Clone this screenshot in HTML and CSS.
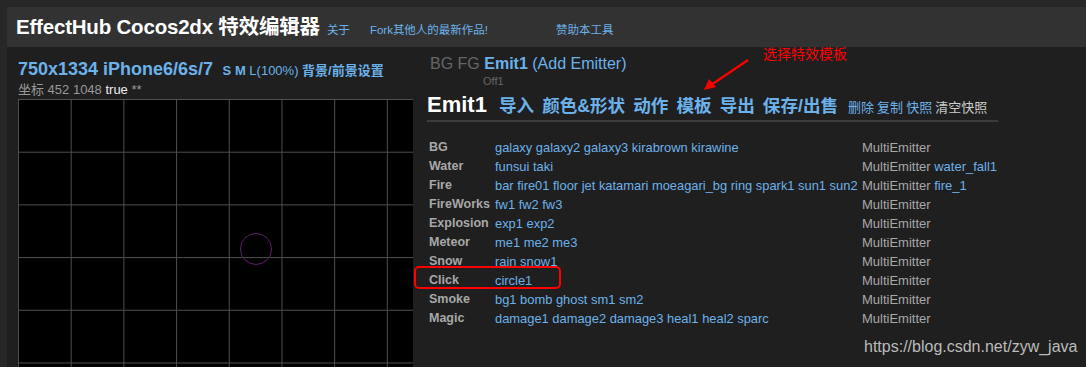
FILE: index.html
```html
<!DOCTYPE html>
<html lang="zh-CN">
<head>
    <meta charset="UTF-8">
    <meta name="viewport" content="width=device-width, initial-scale=1.0">
    <title>EffectHub Cocos2dx 特效编辑器</title>
    <link rel="stylesheet" href="styles.css">
</head>
<body>

<div class="frame">
    <header class="topbar">
        <h1>EffectHub Cocos2dx 特效编辑器</h1>
        <a class="top-link about" href="#">关于</a>
        <a class="top-link fork" href="#">Fork其他人的最新作品!</a>
        <a class="top-link" href="#">赞助本工具</a>
    </header>

    <main class="workspace">
        <!-- 左侧: 预览画布 -->
        <section class="stage-panel">
            <div class="stage-head">
                <a class="device" href="#">750x1334 iPhone6/6s/7</a>
                <span class="sizes"><b>S</b> <b>M</b> L(100%) <b>背景/前景设置</b></span>
            </div>
            <div class="coords">坐标 452 1048 <span class="flag">true</span> **</div>
            <div class="stage">
                <div class="emitter-circle"></div>
            </div>
        </section>

        <!-- 右侧: 编辑器 -->
        <section class="editor">
            <div class="layers">BG FG <a class="strong" href="#">Emit1</a> <a href="#">(Add Emitter)</a></div>
            <div class="off">Off1</div>

            <nav class="tabs">
                <span class="current">Emit1</span>
                <a class="tab" href="#">导入</a>
                <a class="tab" href="#">颜色&amp;形状</a>
                <a class="tab" href="#">动作</a>
                <a class="tab" href="#">模板</a>
                <a class="tab" href="#">导出</a>
                <a class="tab" href="#">保存/出售</a>
                <a class="small first" href="#">删除</a>
                <a class="small" href="#">复制</a>
                <a class="small" href="#">快照</a>
                <span class="small muted">清空快照</span>
            </nav>

            <div class="templates">
                <div class="cat">BG</div><div class="items">galaxy galaxy2 galaxy3 kirabrown kirawine</div><div class="kind">MultiEmitter</div>
                <div class="cat">Water</div><div class="items">funsui taki</div><div class="kind">MultiEmitter <a href="#">water_fall1</a></div>
                <div class="cat">Fire</div><div class="items">bar fire01 floor jet katamari moeagari_bg ring spark1 sun1 sun2</div><div class="kind">MultiEmitter <a href="#">fire_1</a></div>
                <div class="cat">FireWorks</div><div class="items">fw1 fw2 fw3</div><div class="kind">MultiEmitter</div>
                <div class="cat">Explosion</div><div class="items">exp1 exp2</div><div class="kind">MultiEmitter</div>
                <div class="cat">Meteor</div><div class="items">me1 me2 me3</div><div class="kind">MultiEmitter</div>
                <div class="cat">Snow</div><div class="items">rain snow1</div><div class="kind">MultiEmitter</div>
                <div class="cat">Click</div><div class="items">circle1</div><div class="kind">MultiEmitter</div>
                <div class="cat">Smoke</div><div class="items">bg1 bomb ghost sm1 sm2</div><div class="kind">MultiEmitter</div>
                <div class="cat">Magic</div><div class="items">damage1 damage2 damage3 heal1 heal2 sparc</div><div class="kind">MultiEmitter</div>
            </div>
        </section>
    </main>

    <!-- 截图标注 -->
    <div class="note-text">选择特效模板</div>
    <svg class="note-arrow" width="50" height="36" viewBox="0 0 50 36">
        <line x1="47" y1="2" x2="10" y2="27" stroke="#f00" stroke-width="2.2"/>
        <polygon points="3,32 8,21 15,29" fill="#f00"/>
    </svg>
    <div class="note-box"></div>
    <div class="watermark">https://blog.csdn.net/zyw_java</div>
</div>

</body>
</html>
```

FILE: styles.css
```css
html, body {
    margin: 0;
    height: 100%;
    overflow: hidden;
}
body {
    background-color: #272727;
    font-family: "Liberation Sans", "Noto Sans CJK SC", sans-serif;
    color: #aaa;
}
a {
    color: #6cb2ea;
    text-decoration: none;
}
.frame {
    position: relative;
    margin: 7px 0 0 7px;
    height: calc(100% - 7px);
    background-color: #1f1f1f;
}

/* 顶部栏 */
.topbar {
    height: 40px;
    background-color: #323232;
    display: flex;
    align-items: baseline;
    padding-left: 9px;
    line-height: 40px;
}
.topbar h1 {
    margin: 0;
    font-size: 20.5px;
    font-weight: bold;
    color: #fff;
    letter-spacing: -0.2px;
}
.top-link {
    font-size: 11.5px;
    color: #6cb2ea;
}
.about {
    margin-left: 7px;
}
.fork {
    margin-left: 20px;
    margin-right: 68px;
}

/* 主体 */
.workspace {
    display: flex;
    height: calc(100% - 40px);
}
.stage-panel {
    width: 402px;
    padding-left: 11px;
    display: flex;
    flex-direction: column;
}
.stage-head {
    margin-top: 12px;
    line-height: 20px;
    white-space: nowrap;
}
.device {
    font-size: 18px;
    font-weight: bold;
}
.sizes {
    margin-left: 5px;
    font-size: 13px;
    color: #6cb2ea;
}
.coords {
    font-size: 13px;
    line-height: 18px;
    color: #999;
}
.coords .flag {
    color: #eee;
}
.stage {
    position: relative;
    flex: 1;
    width: 395px;
    background-color: #000;
    background-image:
        linear-gradient(to left, #4e4e4e 1px, transparent 1px),
        linear-gradient(to bottom, #4e4e4e 1px, transparent 1px);
    background-size: 52.7px 52.7px;
    background-position: 1px 0;
}
.emitter-circle {
    position: absolute;
    left: 222px;
    top: 134px;
    width: 30px;
    height: 30px;
    border: 1.5px solid #5e1f6e;
    border-radius: 50%;
}

/* 编辑器 */
.editor {
    padding-left: 7px;
    flex: 1;
}
.layers {
    margin-top: 7px;
    padding-left: 3px;
    font-size: 16px;
    line-height: 19px;
    color: #666;
}
.layers .strong {
    font-weight: bold;
}
.off {
    margin-top: 2px;
    padding-left: 56px;
    font-size: 11px;
    line-height: 12px;
    color: #666;
}
.tabs {
    display: flex;
    align-items: baseline;
    gap: 8px;
    width: 571px;
    height: 32px;
    margin-top: 1px;
    border-bottom: 2px solid #3c3c3c;
    white-space: nowrap;
    line-height: 34px;
}
.tabs .current {
    font-size: 22px;
    font-weight: bold;
    color: #fff;
    margin-right: 4px;
}
.tabs .tab {
    font-size: 17.6px;
    font-weight: bold;
}
.tabs .small {
    font-size: 13px;
    margin-left: -5px;
}
.tabs .small.first {
    margin-left: 2px;
}
.tabs .muted {
    color: #ccc;
}

.templates {
    display: grid;
    grid-template-columns: 66px 367px auto;
    margin-top: 16px;
    padding-left: 2px;
    font-size: 13px;
    line-height: 19px;
    white-space: nowrap;
}
.templates .cat {
    font-size: 12.5px;
    font-weight: bold;
    color: #a8a8a8;
}
.templates .items {
    font-size: 12.9px;
    color: #6cb2ea;
}
.templates .kind {
    color: #a8a8a8;
}

/* 标注 */
.note-text {
    position: absolute;
    left: 756px;
    top: 39px;
    font-size: 14px;
    line-height: 16px;
    color: #f00;
}
.note-arrow {
    position: absolute;
    left: 694px;
    top: 51px;
}
.note-box {
    position: absolute;
    left: 407px;
    top: 259px;
    width: 143px;
    height: 19px;
    border: 2px solid #f00;
    border-radius: 5px;
}
.watermark {
    position: absolute;
    left: 857px;
    top: 331px;
    font-size: 16px;
    color: #bbb;
}
```
